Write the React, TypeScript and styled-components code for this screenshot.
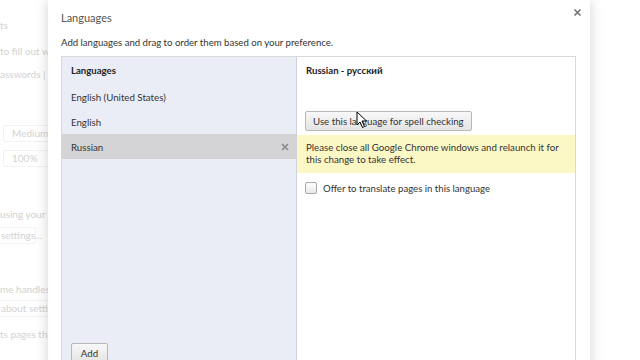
import React from "react";
import styled, { createGlobalStyle } from "styled-components";

const Global = createGlobalStyle`
  html, body { margin: 0; padding: 0; background: #fff; }
  body { font-family: Lato, "Noto Sans", sans-serif; }
  * { box-sizing: border-box; }
`;

const Screen = styled.div`
  position: relative;
  width: 640px;
  height: 360px;
  overflow: hidden;
  background: #fff;
`;

const BackPage = styled.div`
  display: flex;
  flex-direction: column;
  padding-top: 18px;
  font-size: 10px;
  color: #d2d2d2;
  font-family: Lato, "Noto Sans", sans-serif;
`;

const BackLine = styled.div<{ $gap?: number; $x?: number }>`
  height: 14px;
  line-height: 14px;
  margin-top: ${(p) => p.$gap ?? 0}px;
  margin-left: ${(p) => p.$x ?? 0}px;
  white-space: nowrap;
`;

const BackBox = styled.div<{ $gap?: number; $x: number; $w: number }>`
  height: 17px;
  line-height: 15px;
  width: ${(p) => p.$w}px;
  margin-top: ${(p) => p.$gap ?? 0}px;
  margin-left: ${(p) => p.$x}px;
  padding-left: 8px;
  border: 1px solid #f2f2f2;
  border-radius: 2px;
  white-space: nowrap;
`;

const Dialog = styled.div`
  position: absolute;
  left: 48px;
  top: 0;
  width: 542px;
  height: 380px;
  background: #fff;
  box-shadow: 0 0 12px rgba(0, 0, 0, 0.18);
  padding: 0 14px 0 13px;
  display: flex;
  flex-direction: column;
  color: #333;
`;

const TitleBar = styled.div`
  display: flex;
  align-items: center;
  justify-content: space-between;
  height: 34px;
`;

const Title = styled.div`
  font-size: 11px;
  color: #555;
`;

const Close = styled.svg`
  margin-top: -10px;
  margin-right: -6px;
`;

const Desc = styled.div`
  font-size: 9.6px;
  color: #333;
  height: 16px;
  line-height: 16px;
  margin-top: 1px;
  white-space: nowrap;
`;

const Panel = styled.div`
  margin-top: 5px;
  flex: 1;
  display: flex;
  border: 1px solid #d8d8d8;
  border-bottom: none;
`;

const List = styled.div`
  width: 235px;
  background: #eaecf6;
  border-right: 1px solid #cfd2de;
  display: flex;
  flex-direction: column;
`;

const ListHeader = styled.div`
  height: 27px;
  line-height: 27px;
  padding-left: 9px;
  font-weight: bold;
  font-size: 9.6px;
  color: #222;
`;

const Row = styled.div<{ $sel?: boolean }>`
  height: 25px;
  display: flex;
  align-items: center;
  justify-content: space-between;
  padding: 0 6px 0 9px;
  font-size: 9.7px;
  color: #333;
  background: ${(p) => (p.$sel ? "#d4d4d6" : "transparent")};
`;

const RowX = styled.svg`
  margin-right: 1px;
`;

const ListFill = styled.div`
  padding: 182px 0 0 9px;
`;

const Btn = styled.div`
  display: inline-flex;
  align-items: center;
  justify-content: center;
  height: 20px;
  padding: 0 7px;
  border: 1px solid #b8b8b8;
  border-radius: 2px;
  background: linear-gradient(#f8f8f8, #e4e4e4);
  font-size: 9.7px;
  color: #333;
  white-space: nowrap;
`;

const AddBtn = styled(Btn)`
  width: 37px;
  padding: 0;
`;

const Detail = styled.div`
  flex: 1;
  display: flex;
  flex-direction: column;
  background: #fff;
`;

const DetailHeader = styled.div`
  height: 27px;
  line-height: 27px;
  padding-left: 9px;
  font-weight: bold;
  font-size: 9.6px;
  color: #222;
`;

const BtnRow = styled.div`
  padding: 25px 0 0 8px;
  height: 51px;
`;

const Notice = styled.div`
  background: #fcf8c6;
  padding: 6px 9px 0 9px;
  font-size: 9.7px;
  line-height: 12px;
  color: #333;
  height: 38px;
  white-space: nowrap;
`;

const CheckRow = styled.div`
  display: flex;
  align-items: center;
  gap: 6px;
  padding: 9px 0 0 8px;
  font-size: 9.6px;
  color: #333;
`;

const Check = styled.span`
  width: 12px;
  height: 12px;
  border: 1px solid #aaa;
  border-radius: 2px;
  background: linear-gradient(#fff, #e8e8e8);
`;

const Cursor = styled.svg`
  position: absolute;
  left: 356px;
  top: 111px;
`;

export default function App() {
  return (
    <Screen>
      <Global />
      <BackPage>
        <BackLine>ts</BackLine>
        <BackLine $gap={12}>to fill out web forms</BackLine>
        <BackLine $gap={9}>asswords | Manage</BackLine>
        <BackBox $gap={44} $x={3} $w={60}>Medium</BackBox>
        <BackBox $gap={8} $x={3} $w={60}>100%</BackBox>
        <BackLine $gap={40}>using your computer's</BackLine>
        <BackBox $gap={6} $x={-8} $w={44}>settings...</BackBox>
        <BackLine $gap={38}>me handles</BackLine>
        <BackBox $gap={4} $x={-8} $w={90}>about settings</BackBox>
        <BackLine $gap={10}>ts pages that</BackLine>
      </BackPage>
      <Dialog>
        <TitleBar>
          <Title>Languages</Title>
          <Close width="9" height="9" viewBox="0 0 9 9">
            <path d="M1.5 1.5 L7.5 7.5 M7.5 1.5 L1.5 7.5" stroke="#707070" strokeWidth="1.5" />
          </Close>
        </TitleBar>
        <Desc>Add languages and drag to order them based on your preference.</Desc>
        <Panel>
          <List>
            <ListHeader>Languages</ListHeader>
            <Row>English (United States)</Row>
            <Row>English</Row>
            <Row $sel>
              Russian
              <RowX width="8" height="8" viewBox="0 0 8 8">
                <path d="M1 1 L7 7 M7 1 L1 7" stroke="#8a8a8a" strokeWidth="1.7" />
              </RowX>
            </Row>
            <ListFill>
              <AddBtn>Add</AddBtn>
            </ListFill>
          </List>
          <Detail>
            <DetailHeader>Russian - русский</DetailHeader>
            <BtnRow>
              <Btn>Use this language for spell checking</Btn>
            </BtnRow>
            <Notice>
              Please close all Google Chrome windows and relaunch it for
              <br />
              this change to take effect.
            </Notice>
            <CheckRow>
              <Check />
              Offer to translate pages in this language
            </CheckRow>
          </Detail>
        </Panel>
      </Dialog>
      <Cursor width="12" height="18" viewBox="0 0 12 18">
        <path d="M1 1 L1 14 L4 11 L6.5 16.5 L8.5 15.5 L6 10 L10.5 10 Z" fill="#fff" stroke="#000" strokeWidth="1" strokeLinejoin="round" />
      </Cursor>
    </Screen>
  );
}
